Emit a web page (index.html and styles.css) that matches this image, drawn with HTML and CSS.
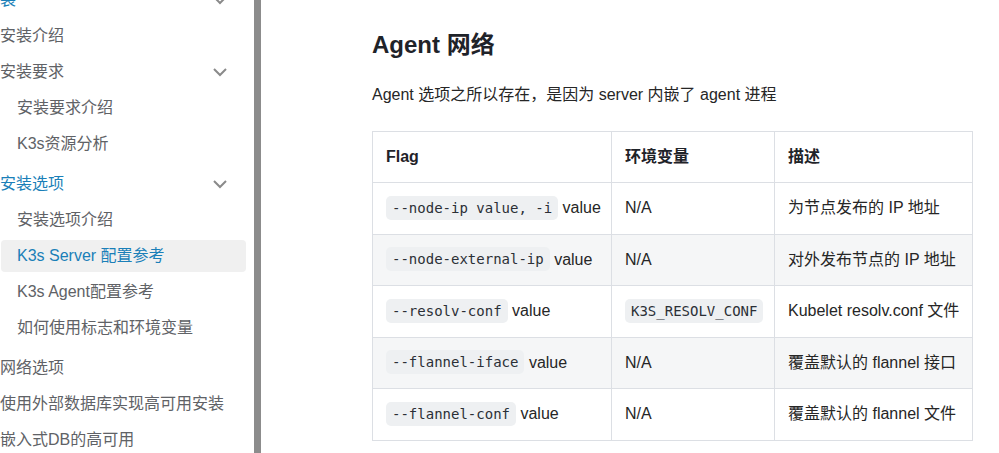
FILE: index.html
```html
<!DOCTYPE html>
<html lang="zh-CN">
<head>
<meta charset="utf-8">
<title>Agent 网络</title>
<link rel="stylesheet" href="styles.css">
</head>
<body>
<div class="page">
  <nav class="sidebar">
    <ul class="menu">
      <li class="item top active-group">装<svg class="chev" viewBox="0 0 16 9"><polyline points="2,1 8,7 14,1"/></svg></li>
      <li class="item top">安装介绍</li>
      <li class="item top">安装要求<svg class="chev" viewBox="0 0 16 9"><polyline points="2,1 8,7 14,1"/></svg></li>
      <li class="sub">
        <ul class="menu">
          <li class="item child">安装要求介绍</li>
          <li class="item child">K3s资源分析</li>
        </ul>
      </li>
      <li class="item top active-group">安装选项<svg class="chev" viewBox="0 0 16 9"><polyline points="2,1 8,7 14,1"/></svg></li>
      <li class="sub">
        <ul class="menu">
          <li class="item child">安装选项介绍</li>
          <li class="item child current">K3s Server 配置参考</li>
          <li class="item child">K3s Agent配置参考</li>
          <li class="item child">如何使用标志和环境变量</li>
        </ul>
      </li>
      <li class="item top">网络选项</li>
      <li class="item top">使用外部数据库实现高可用安装</li>
      <li class="item top">嵌入式DB的高可用</li>
    </ul>
  </nav>
  <div class="scrollbar"></div>
  <main class="content">
    <h2 class="title">Agent 网络</h2>
    <p class="lead">Agent 选项之所以存在，是因为 server 内嵌了 agent 进程</p>
    <table class="flags">
      <colgroup><col class="c1"><col class="c2"><col class="c3"></colgroup>
      <thead>
        <tr><th>Flag</th><th>环境变量</th><th>描述</th></tr>
      </thead>
      <tbody>
        <tr><td><code>--node-ip value, -i</code> value</td><td>N/A</td><td>为节点发布的 IP 地址</td></tr>
        <tr><td><code>--node-external-ip</code> value</td><td>N/A</td><td>对外发布节点的 IP 地址</td></tr>
        <tr><td><code>--resolv-conf</code> value</td><td><code>K3S_RESOLV_CONF</code></td><td>Kubelet resolv.conf 文件</td></tr>
        <tr><td><code>--flannel-iface</code> value</td><td>N/A</td><td>覆盖默认的 flannel 接口</td></tr>
        <tr><td><code>--flannel-conf</code> value</td><td>N/A</td><td>覆盖默认的 flannel 文件</td></tr>
      </tbody>
    </table>
  </main>
</div>
</body>
</html>
```

FILE: styles.css
```css
* { box-sizing: border-box; }
html, body { margin: 0; padding: 0; background: #fff; }
body {
  font-family: "Liberation Sans", Arial, "Noto Sans CJK SC", sans-serif;
  font-size: 16px;
  color: #262626;
  overflow: hidden;
}
.page {
  display: flex;
  height: 453px;
  overflow: hidden;
}
.sidebar {
  width: 254px;
  flex: none;
  overflow: hidden;
}
.menu {
  list-style: none;
  margin: 0;
  padding: 0;
}
.sidebar > .menu { margin-top: -16px; }
.item {
  display: flex;
  align-items: center;
  justify-content: space-between;
  height: 32px;
  width: 245px;
  margin: 0 0 4px 1px;
  padding: 0 18px 0 0;
  line-height: 32px;
  color: #606266;
  border-radius: 4px;
  white-space: nowrap;
}
.item.top { margin-left: 0; width: 246px; }
.item.child { padding-left: 16px; }
.sub { padding-bottom: 4px; }
.active-group { color: #1a7fb8; }
.current { background: #f0f0f0; color: #1a7fb8; }
.chev {
  width: 16px;
  height: 9px;
  flex: none;
  fill: none;
  stroke: #8a8a8a;
  stroke-width: 2;
}
.scrollbar {
  width: 7px;
  flex: none;
  background: #8c8c8c;
}
.content {
  flex: 1;
  padding-left: 111px;
}
.title {
  margin: 29px 0 0;
  font-size: 24px;
  line-height: 32px;
  font-weight: bold;
  color: #1f2329;
}
.lead {
  margin: 22px 0 0;
  line-height: 24px;
  color: #262626;
}
.flags {
  margin-top: 24px;
  width: 600px;
  table-layout: fixed;
  border-collapse: collapse;
  color: #262626;
}
.c1 { width: 239px; }
.c2 { width: 163px; }
.c3 { width: 198px; }
.flags th, .flags td {
  border: 1px solid #dcdfe4;
  padding: 13px 0 13px 13px;
  line-height: 24px;
  height: 51px;
  text-align: left;
  white-space: nowrap;
  vertical-align: middle;
}
.flags tbody td { height: 51.5px; }
.flags th { font-weight: bold; color: #1f2329; }
.flags tbody tr:nth-child(even) td { background: #f5f6f7; }
code {
  display: inline-block;
  vertical-align: middle;
  font-family: "DejaVu Sans Mono", "Liberation Mono", monospace;
  font-size: 14px;
  line-height: 24px;
  padding: 0 6px;
  background: #eef0f2;
  border-radius: 5px;
  color: #2b2f36;
  margin-top: -3px;
}
```
